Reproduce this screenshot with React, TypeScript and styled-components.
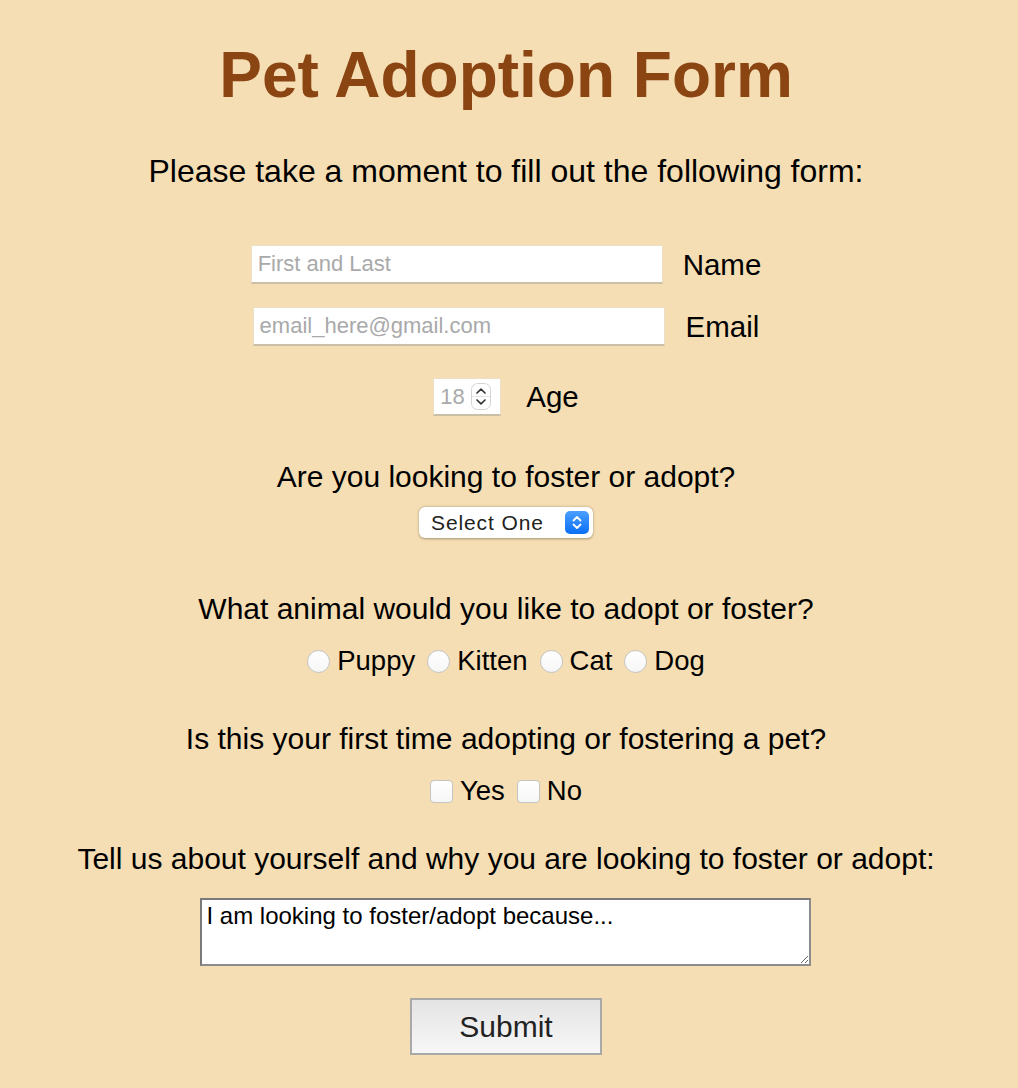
import React from "react";
import styled, { createGlobalStyle } from "styled-components";

const Global = createGlobalStyle`
  html, body { margin: 0; padding: 0; background: #f5deb3; }
  body {
    font-family: "Liberation Sans", Arial, Helvetica, sans-serif;
    color: #000;
  }
`;

const Page = styled.main`
  min-height: 1088px;
  box-sizing: border-box;
  padding: 38px 6px 0 0;
  display: flex;
  flex-direction: column;
  align-items: center;
`;

const Title = styled.h1`
  margin: 0;
  font-size: 64px;
  line-height: 74px;
  font-weight: 700;
  color: #8b4513;
`;

const Intro = styled.p`
  margin: 39px 0 0;
  font-size: 32px;
  line-height: 40px;
`;

const Form = styled.form`
  display: flex;
  flex-direction: column;
  align-items: center;
  margin-top: 54px;
`;

const FieldRow = styled.div<{ $top?: number; $gap?: number }>`
  display: flex;
  align-items: center;
  gap: ${(p) => p.$gap ?? 20}px;
  margin-top: ${(p) => p.$top ?? 0}px;
`;

const TextInput = styled.input`
  width: 412px;
  height: 39px;
  box-sizing: border-box;
  margin: 0;
  padding: 0 6px;
  background: #fff;
  border: 1px solid #ecdfc6;
  border-bottom: 2px solid #cbbfa8;
  font-family: inherit;
  font-size: 22px;
  color: #000;
  outline: none;
  &::placeholder { color: #a9a9a9; }
`;

const FieldLabel = styled.label`
  font-size: 29.5px;
  line-height: 36px;
`;

const AgeBox = styled.div`
  width: 68px;
  height: 38px;
  box-sizing: border-box;
  display: flex;
  align-items: center;
  background: #fff;
  border: 1px solid #ecdfc6;
  border-bottom: 2px solid #cbbfa8;
  padding: 0 0 0 6px;
`;

const AgeInput = styled.input`
  width: 31px;
  border: none;
  outline: none;
  padding: 0;
  margin: 0;
  background: transparent;
  font-family: inherit;
  font-size: 22px;
  &::placeholder { color: #a9a9a9; }
`;

const Question = styled.p<{ $top: number }>`
  margin: ${(p) => p.$top}px 0 0;
  font-size: 30px;
  line-height: 36px;
  text-align: center;
`;

const SelectWrap = styled.div`
  position: relative;
  margin-top: 12px;
  width: 174px;
  height: 31px;
`;

const Select = styled.select`
  appearance: none;
  -webkit-appearance: none;
  width: 100%;
  height: 100%;
  box-sizing: border-box;
  margin: 0;
  padding: 0 40px 0 12px;
  border: none;
  border-radius: 6px;
  background: #fff;
  box-shadow: 0 0.5px 2.5px rgba(0, 0, 0, 0.35);
  font-family: inherit;
  font-size: 21px;
  letter-spacing: 0.9px;
  color: #222;
  outline: none;
`;

const StepperIcon = styled.svg`
  position: absolute;
  right: 4px;
  top: 4px;
  pointer-events: none;
`;

const ChoiceRow = styled.div<{ $top: number }>`
  display: flex;
  align-items: center;
  gap: 12px;
  height: 32px;
  margin-top: ${(p) => p.$top}px;
`;

const Choice = styled.label`
  display: inline-flex;
  align-items: center;
  gap: 7px;
  font-size: 27.5px;
  line-height: 32px;
`;

const Radio = styled.input`
  appearance: none;
  -webkit-appearance: none;
  width: 23px;
  height: 23px;
  margin: 0;
  border-radius: 50%;
  border: 1px solid #c4c4c4;
  background: linear-gradient(#ffffff, #f6f6f6);
  box-sizing: border-box;
`;

const Check = styled.input`
  appearance: none;
  -webkit-appearance: none;
  width: 23px;
  height: 23px;
  margin: 0;
  border-radius: 4px;
  border: 1px solid #c4c4c4;
  background: linear-gradient(#ffffff, #f6f6f6);
  box-sizing: border-box;
`;

const About = styled.textarea`
  margin-top: 21px;
  width: 611px;
  height: 68px;
  box-sizing: border-box;
  padding: 2px 4px;
  border: 2px solid #8c8c8c;
  border-top-color: #7a7a7a;
  border-left-color: #7a7a7a;
  background: #fff;
  font-family: inherit;
  font-size: 24px;
  line-height: 27px;
  color: #000;
  outline: none;
`;

const SubmitButton = styled.button`
  margin-top: 32px;
  width: 192px;
  height: 57px;
  box-sizing: border-box;
  border: 2px solid #a9a9a9;
  border-radius: 0;
  background: linear-gradient(#e4e4e4, #f7f7f7);
  font-family: inherit;
  font-size: 30px;
  color: #222;
  padding: 0;
`;

const NumberSpinner = () => (
  <svg width="20" height="27" viewBox="0 0 20 27" aria-hidden="true">
    <rect x="0.5" y="0.5" width="19" height="26" rx="6" fill="#fff" stroke="#d4d4d4" />
    <line x1="1" y1="13.5" x2="19" y2="13.5" stroke="#e6e6e6" />
    <path d="M6 10 L10 6.2 L14 10" fill="none" stroke="#333" strokeWidth="1.7" strokeLinecap="round" strokeLinejoin="round" />
    <path d="M6 17 L10 20.8 L14 17" fill="none" stroke="#333" strokeWidth="1.7" strokeLinecap="round" strokeLinejoin="round" />
  </svg>
);

const animals = ["Puppy", "Kitten", "Cat", "Dog"];

export default function App() {
  return (
    <>
      <Global />
      <Page>
        <Title>Pet Adoption Form</Title>
        <Intro>Please take a moment to fill out the following form:</Intro>
        <Form onSubmit={(e) => e.preventDefault()}>
          <FieldRow>
            <TextInput id="name" placeholder="First and Last" />
            <FieldLabel htmlFor="name">Name</FieldLabel>
          </FieldRow>
          <FieldRow $top={23} $gap={21}>
            <TextInput id="email" type="email" placeholder="email_here@gmail.com" />
            <FieldLabel htmlFor="email">Email</FieldLabel>
          </FieldRow>
          <FieldRow $top={32} $gap={25}>
            <AgeBox>
              <AgeInput id="age" placeholder="18" />
              <NumberSpinner />
            </AgeBox>
            <FieldLabel htmlFor="age">Age</FieldLabel>
          </FieldRow>

          <Question $top={43}>Are you looking to foster or adopt?</Question>
          <SelectWrap>
            <Select defaultValue="">
              <option value="">Select One</option>
              <option value="foster">Foster</option>
              <option value="adopt">Adopt</option>
            </Select>
            <StepperIcon width="24" height="23" viewBox="0 0 24 23" aria-hidden="true">
              <defs>
                <linearGradient id="stepBlue" x1="0" y1="0" x2="0" y2="1">
                  <stop offset="0" stopColor="#4aa0ff" />
                  <stop offset="1" stopColor="#0a6ff5" />
                </linearGradient>
              </defs>
              <rect x="0" y="0" width="24" height="23" rx="5" fill="url(#stepBlue)" />
              <path d="M8.5 9.5 L12 6 L15.5 9.5" fill="none" stroke="#fff" strokeWidth="1.8" strokeLinecap="round" strokeLinejoin="round" />
              <path d="M8.5 13.5 L12 17 L15.5 13.5" fill="none" stroke="#fff" strokeWidth="1.8" strokeLinecap="round" strokeLinejoin="round" />
            </StepperIcon>
          </SelectWrap>

          <Question $top={53}>What animal would you like to adopt or foster?</Question>
          <ChoiceRow $top={18}>
            {animals.map((a) => (
              <Choice key={a}>
                <Radio type="radio" name="animal" value={a.toLowerCase()} />
                {a}
              </Choice>
            ))}
          </ChoiceRow>

          <Question $top={44}>Is this your first time adopting or fostering a pet?</Question>
          <ChoiceRow $top={18}>
            <Choice>
              <Check type="checkbox" name="first" value="yes" />
              Yes
            </Choice>
            <Choice>
              <Check type="checkbox" name="first" value="no" />
              No
            </Choice>
          </ChoiceRow>

          <Question $top={34}>Tell us about yourself and why you are looking to foster or adopt:</Question>
          <About defaultValue="I am looking to foster/adopt because..." />
          <SubmitButton type="submit">Submit</SubmitButton>
        </Form>
      </Page>
    </>
  );
}
